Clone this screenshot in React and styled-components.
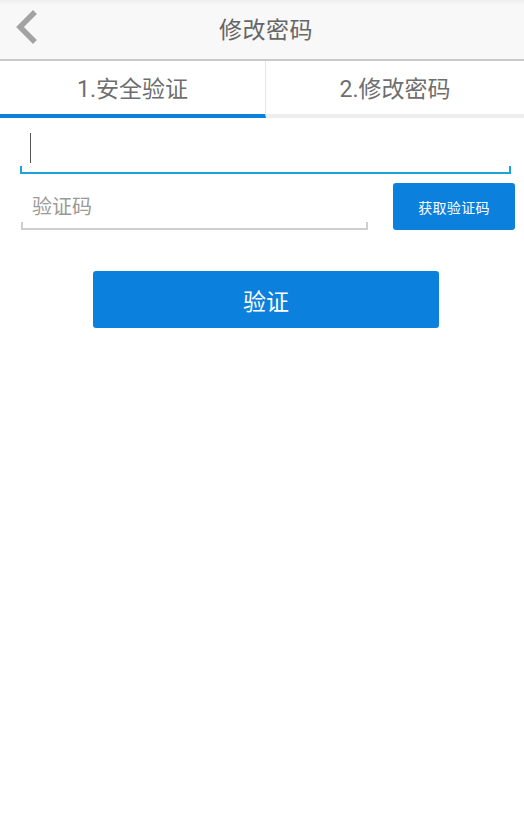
import React from "react";
import styled, { createGlobalStyle } from "styled-components";

const GlobalStyle = createGlobalStyle`
  html, body {
    margin: 0;
    padding: 0;
    background: #ffffff;
    font-family: "Roboto", "Noto Sans CJK SC", sans-serif;
  }
  * {
    box-sizing: border-box;
  }
`;

const Page = styled.div`
  width: 524px;
  min-height: 824px;
  background: #ffffff;
`;

const Header = styled.header`
  height: 61px;
  display: grid;
  grid-template-columns: 64px 1fr 56px;
  align-items: center;
  background: linear-gradient(#efefef 0, #f8f8f8 5px, #f8f8f8 100%);
  border-bottom: 2px solid #c9c9c9;
`;

const BackButton = styled.button`
  height: 100%;
  padding: 0 0 4px 13px;
  border: none;
  background: none;
  display: flex;
  align-items: center;
  cursor: pointer;
`;

const Title = styled.h1`
  margin: 0 0 4px;
  text-align: center;
  font-size: 23px;
  font-weight: 400;
  color: #666666;
  letter-spacing: 0.5px;
`;

const Tabs = styled.nav`
  display: flex;
  height: 57px;
`;

const Tab = styled.div`
  flex: ${(p) => (p.$first ? "0 0 266px" : "1")};
  display: flex;
  align-items: center;
  justify-content: center;
  padding-bottom: 1px;
  font-size: 23px;
  color: #6e6e6e;
  border-bottom: 4px solid ${(p) => (p.$active ? "#0b80dc" : "#eeeeee")};
  border-right: ${(p) => (p.$first ? "1px solid #e6e6e6" : "none")};
`;

const Form = styled.form`
  display: flex;
  flex-direction: column;
  padding: 0 9px 0 20px;
`;

const Field = styled.div`
  position: relative;
  display: flex;
  align-items: center;
  height: ${(p) => p.$height}px;
  margin-right: ${(p) => p.$inset || 0}px;
  border-bottom: 2px solid ${(p) => p.$color};
  flex: ${(p) => (p.$grow ? 1 : "none")};

  &::after {
    content: "";
    position: absolute;
    left: 0;
    right: 0;
    bottom: -2px;
    height: 6px;
    border: 2px solid ${(p) => p.$color};
    border-top: none;
  }
`;

const Input = styled.input`
  width: 100%;
  height: 100%;
  border: none;
  outline: none;
  background: transparent;
  padding: 3px 0 0 11px;
  font-family: inherit;
  font-size: 20px;
  color: #333333;
  caret-color: transparent;

  &::placeholder {
    color: #9a9a9a;
  }
`;

const Caret = styled.span`
  position: absolute;
  left: 10px;
  top: 15px;
  width: 1px;
  height: 30px;
  background: #555555;
`;

const CodeRow = styled.div`
  display: flex;
  align-items: flex-start;
  gap: 25px;
  margin-top: 9px;
  padding-left: 1px;
`;

const CodeButton = styled.button`
  width: 122px;
  height: 47px;
  border: none;
  border-radius: 3px;
  background: #0b80dc;
  color: #ffffff;
  font-family: inherit;
  font-size: 14px;
  letter-spacing: 0.3px;
  cursor: pointer;
`;

const SubmitButton = styled.button`
  align-self: center;
  width: 346px;
  height: 57px;
  margin: 41px 0 0 -3px;
  border: none;
  border-radius: 3px;
  background: #0b80dc;
  color: #ffffff;
  font-family: inherit;
  font-size: 23px;
  cursor: pointer;
`;

const BackIcon = () => (
  <svg width="26" height="36" viewBox="0 0 26 36">
    <polyline
      points="20,4 7,17 20,30"
      fill="none"
      stroke="#a3a3a3"
      strokeWidth="5.5"
      strokeLinecap="square"
    />
  </svg>
);

const App = () => {
  return (
    <>
      <GlobalStyle />
      <Page>
        <Header>
          <BackButton type="button" aria-label="返回">
            <BackIcon />
          </BackButton>
          <Title>修改密码</Title>
          <span />
        </Header>

        <Tabs>
          <Tab $active $first>
            1.安全验证
          </Tab>
          <Tab>2.修改密码</Tab>
        </Tabs>

        <Form onSubmit={(e) => e.preventDefault()}>
          <Field $height={56} $color="#1ea2dc" $inset={4}>
            <Input type="tel" />
            <Caret />
          </Field>

          <CodeRow>
            <Field $height={47} $color="#cfcfcf" $grow>
              <Input placeholder="验证码" />
            </Field>
            <CodeButton type="button">获取验证码</CodeButton>
          </CodeRow>

          <SubmitButton type="submit">验证</SubmitButton>
        </Form>
      </Page>
    </>
  );
};

export default App;
